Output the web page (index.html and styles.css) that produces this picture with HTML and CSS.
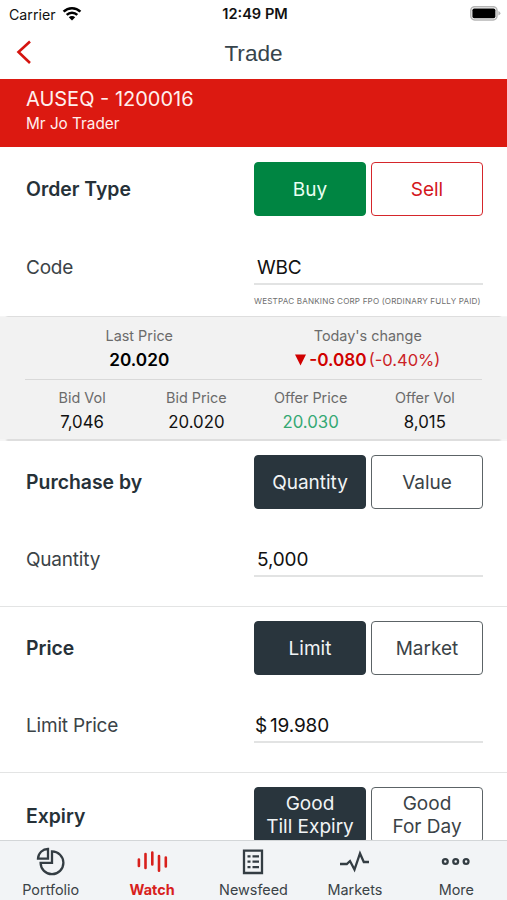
FILE: index.html
```
<!DOCTYPE html>
<html lang="en">
<head>
    <meta charset="UTF-8">
    <meta name="viewport" content="width=device-width, initial-scale=1.0">
    <title>Trade</title>
    <link rel="stylesheet" href="styles.css">
</head>
<body>
    <div class="status">
        <div class="carrier">
            <span>Carrier</span>
            <svg width="20" height="15" viewBox="0 0 20 15">
                <path d="M1.6 5.6a12 12 0 0 1 16.8 0M4.7 8.8a7.6 7.6 0 0 1 10.6 0" fill="none" stroke="#000" stroke-width="2.5"/>
                <path d="M10 14.4L6.8 11.2a4.6 4.6 0 0 1 6.4 0z"/>
            </svg>
        </div>
        <div class="time">12:49 PM</div>
        <svg class="battery" width="31" height="15" viewBox="0 0 31 15">
            <rect x="0.8" y="0.7" width="26.2" height="13.2" rx="3.8" fill="#fff" stroke="#b5b5b5" stroke-width="1.5"/>
            <rect x="2.4" y="2.4" width="23" height="9.8" rx="1.8"/>
            <path d="M28.4 5v4.6q2-.8 2-2.3t-2-2.3z" fill="#b5b5b5"/>
        </svg>
    </div>
    <header class="nav">
        <svg class="back" width="16" height="26" viewBox="0 0 16 26">
            <path d="M14 2.5L2.5 13 14 24" fill="none" stroke="#d5140f" stroke-width="2.6"/>
        </svg>
        <h1>Trade</h1>
    </header>
    <div class="account">
        <p class="number">AUSEQ - 1200016</p>
        <p class="holder">Mr Jo Trader</p>
    </div>

    <main>
        <section class="block order">
            <div class="row">
                <h2>Order Type</h2>
                <div class="buttons">
                    <button class="buy">Buy</button>
                    <button class="sell">Sell</button>
                </div>
            </div>
            <div class="row field">
                <label>Code</label>
                <div class="value">WBC</div>
            </div>
            <p class="company">WESTPAC BANKING CORP FPO (ORDINARY FULLY PAID)</p>
        </section>

        <section class="quote">
            <div class="last">
                <div>
                    <p>Last Price</p>
                    <b>20.020</b>
                </div>
                <div>
                    <p>Today's change</p>
                    <div class="change">
                        <svg width="11" height="12" viewBox="0 0 11 12"><path d="M0 .5h11L5.5 11.5z" fill="#d00000"/></svg>
                        <b>-0.080</b><span>(-0.40%)</span>
                    </div>
                </div>
            </div>
            <div class="depth">
                <div>
                    <p>Bid Vol</p>
                    <span>7,046</span>
                </div>
                <div>
                    <p>Bid Price</p>
                    <span>20.020</span>
                </div>
                <div>
                    <p>Offer Price</p>
                    <span class="green">20.030</span>
                </div>
                <div>
                    <p>Offer Vol</p>
                    <span>8,015</span>
                </div>
            </div>
        </section>

        <section class="block">
            <div class="row">
                <h2>Purchase by</h2>
                <div class="buttons">
                    <button class="active">Quantity</button>
                    <button>Value</button>
                </div>
            </div>
            <div class="row field">
                <label>Quantity</label>
                <div class="value">5,000</div>
            </div>
        </section>

        <section class="block">
            <div class="row">
                <h2>Price</h2>
                <div class="buttons">
                    <button class="active">Limit</button>
                    <button>Market</button>
                </div>
            </div>
            <div class="row field">
                <label>Limit Price</label>
                <div class="value money"><span>$</span>19.980</div>
            </div>
        </section>

        <section class="block expiry">
            <div class="row">
                <h2>Expiry</h2>
                <div class="buttons">
                    <button class="active">Good<br>Till Expiry</button>
                    <button>Good<br>For Day</button>
                </div>
            </div>
        </section>
    </main>

    <footer class="tabs">
        <div class="tab">
            <svg width="32" height="30" viewBox="0 0 32 30">
                <path d="M17 4.4A11.4 11.4 0 1 1 5.6 15.8H17z"/>
                <path d="M13 2v9.6H3A10 10 0 0 1 13 2z"/>
            </svg>
            <span>Portfolio</span>
        </div>
        <div class="tab selected">
            <svg width="32" height="30" viewBox="0 0 32 30">
                <path d="M2.9 12.5v6.5M9.5 7v14M16.3 5.5v12M23 9v14.7M29.8 10.5v9"/>
            </svg>
            <span>Watch</span>
        </div>
        <div class="tab">
            <svg width="32" height="30" viewBox="0 0 32 30">
                <path d="M7 3.7h18v22.3H7z"/>
                <path d="M10.5 9.3h3M15.5 9.3h6.5M10.5 14.7h3M15.5 14.7h6.5M10.5 20.2h3M15.5 20.2h6.5"/>
            </svg>
            <span>Newsfeed</span>
        </div>
        <div class="tab">
            <svg width="32" height="30" viewBox="0 0 32 30">
                <path d="M1 17h6.8l3.2-3 4.5 8.5L21 6.5l3.8 8.5H30"/>
            </svg>
            <span>Markets</span>
        </div>
        <div class="tab">
            <svg width="32" height="30" viewBox="0 0 32 30">
                <circle cx="5.3" cy="14.5" r="2.4"/>
                <circle cx="15.7" cy="14.5" r="2.4"/>
                <circle cx="26.1" cy="14.5" r="2.4"/>
            </svg>
            <span>More</span>
        </div>
    </footer>
</body>
</html>
```
FILE: styles.css
```
* {
    margin: 0;
    padding: 0;
    box-sizing: border-box;
}
body {
    height: 900px;
    display: flex;
    flex-direction: column;
    overflow: hidden;
    background-color: white;
    color: #3b4347;
    font-family: Inter, "Liberation Sans", sans-serif;
    font-size: 19px;
}
.status {
    height: 28px;
    display: grid;
    grid-template-columns: 1fr auto 1fr;
    align-items: center;
    padding: 0 6px 0 9px;
    color: #111;
    font-size: 14.2px;
}
.carrier {
    display: flex;
    align-items: center;
    gap: 6px;
}
.carrier svg {
    margin-top: -2px;
}
.time {
    font-size: 14.6px;
    font-weight: 600;
}
.battery {
    justify-self: end;
    margin-top: -1px;
}
.nav {
    height: 51px;
    display: grid;
    grid-template-columns: 1fr auto 1fr;
    align-items: center;
    padding: 0 16px;
}
.nav h1 {
    font: 22.6px "Liberation Sans", Arial, sans-serif;
    color: #37444c;
}
.back {
    margin-top: -3px;
}
.account {
    height: 68px;
    padding: 7px 26px;
    background-color: #dc1911;
    color: #ffefed;
}
.number {
    font-size: 20px;
    line-height: 26px;
}
.holder {
    font-size: 15.3px;
    line-height: 23px;
}
main {
    flex: 1;
    min-height: 0;
    overflow: hidden;
}
.block {
    height: 166px;
    padding: 14px 24px 0 26px;
    border-bottom: 1px solid #e3e4e4;
}
.order {
    height: 169px;
    padding-top: 15px;
    border-bottom: none;
}
.row {
    display: grid;
    grid-template-columns: 1fr 229px;
    align-items: center;
}
h2 {
    color: #263138;
    font-size: 19.4px;
    font-weight: 600;
}
.buttons {
    display: grid;
    grid-template-columns: 1fr 1fr;
    gap: 5px;
}
button {
    height: 54px;
    border: 1px solid #5c6366;
    border-radius: 4px;
    background-color: white;
    color: #3b4347;
    font-family: inherit;
    font-size: 19px;
    line-height: 23px;
}
.active {
    background-color: #29353d;
    border-color: #29353d;
    color: #f1f4f5;
}
.buy {
    background-color: #008542;
    border-color: #008542;
    color: #e9fff2;
}
.sell {
    border-color: #d5262b;
    color: #d3161c;
}
.expiry h2 {
    padding-top: 2px;
}
.expiry button {
    height: 56px;
}
.field {
    margin-top: 32px;
}
.order .field {
    margin-top: 33px;
}
.field label {
    letter-spacing: -0.2px;
}
.value {
    height: 36px;
    padding-left: 3px;
    border-bottom: 2px solid #e2e3e3;
    line-height: 37px;
    letter-spacing: -0.15px;
    color: #111;
}
.money {
    display: flex;
    gap: 3px;
    padding-left: 1px;
}
.company {
    margin: 10px 0 0 228px;
    color: #6f6f6f;
    font-size: 8.1px;
    letter-spacing: 0.17px;
    line-height: 12px;
    white-space: nowrap;
}
.quote {
    height: 125px;
    padding: 0 25px;
    background-color: #f2f2f2;
    border-top: 1px solid #dedede;
    border-bottom: 2px solid #e2e2e2;
    border-image: linear-gradient(to right, #f5f5f5 6px, #dedede 9px, #dedede 498px, #f5f5f5 501px) 1;
    border-left: 0;
    border-right: 0;
    text-align: center;
    color: #111;
    font-size: 16.8px;
}
.quote p {
    color: #6b6b6b;
    font-size: 14.4px;
    line-height: 20px;
}
.quote b {
    font-size: 17.2px;
    font-weight: 600;
    color: #000;
}
.last {
    height: 63px;
    display: grid;
    grid-template-columns: 1fr 1fr;
    padding-top: 9px;
    border-bottom: 1px solid #d9d9d9;
    line-height: 28px;
}
.change {
    display: flex;
    align-items: center;
    justify-content: center;
    font-size: 16.5px;
    color: #cb2226;
}
.change b {
    margin: 0 2px 0 3px;
    color: #d00000;
}
.depth {
    display: grid;
    grid-template-columns: repeat(4, 1fr);
    padding-top: 8px;
    line-height: 28px;
}
.depth .green {
    color: #35a873;
}
.tabs {
    height: 60px;
    display: grid;
    grid-template-columns: repeat(5, 1fr);
    border-top: 1px solid #d3d6d8;
    background-color: #f2f4f6;
}
.tab {
    display: flex;
    flex-direction: column;
    align-items: center;
    padding-top: 6px;
    font-size: 14.4px;
    line-height: 26px;
}
.tab svg {
    flex: none;
    fill: none;
    stroke: #343d43;
    stroke-width: 2.3;
}
.selected {
    color: #d8201c;
    font-weight: 700;
}
.selected svg {
    stroke: #d8201c;
    stroke-width: 2.6;
    stroke-linecap: round;
}
```
